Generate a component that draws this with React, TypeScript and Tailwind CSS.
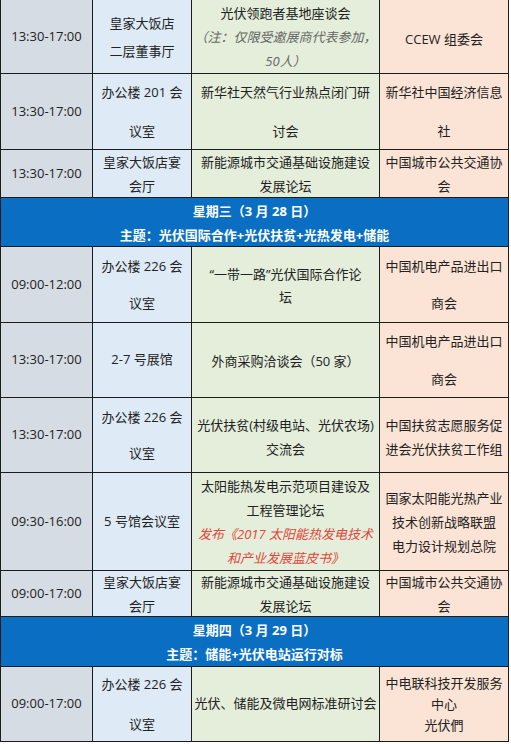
import React from 'react';

type Line = string | { text: string; kind: 'note' | 'red' };

interface Cell {
  lines: Line[];
  lh?: string;
  pad?: string;
}

interface Row {
  type: 'row';
  time: string;
  venue: Cell;
  event: Cell;
  org: Cell;
}

interface Header {
  type: 'header';
  day: string;
  theme: string;
}

const rows: (Row | Header)[] = [
  {
    type: 'row',
    time: '13:30-17:00',
    venue: { lines: ['皇家大饭店', '二层董事厅'], lh: 'leading-[28px]' },
    event: {
      lines: [
        '光伏领跑者基地座谈会',
        { text: '（注：仅限受邀展商代表参加，', kind: 'note' },
        { text: '50人）', kind: 'note' },
      ],
      lh: 'leading-[24px]',
    },
    org: { lines: ['CCEW 组委会'], pad: 'pt-[6px]' },
  },
  {
    type: 'row',
    time: '13:30-17:00',
    venue: { lines: ['办公楼 201 会', '议室'], lh: 'leading-[39px]' },
    event: { lines: ['新华社天然气行业热点闭门研', '讨会'], lh: 'leading-[39px]' },
    org: { lines: ['新华社中国经济信息', '社'], lh: 'leading-[39px]' },
  },
  {
    type: 'row',
    time: '13:30-17:00',
    venue: { lines: ['皇家大饭店宴', '会厅'], lh: 'leading-[24px]' },
    event: { lines: ['新能源城市交通基础设施建设', '发展论坛'], lh: 'leading-[24px]' },
    org: { lines: ['中国城市公共交通协', '会'], lh: 'leading-[24px]' },
  },
  { type: 'header', day: '星期三（3 月 28 日）', theme: '主题：光伏国际合作+光伏扶贫+光热发电+储能' },
  {
    type: 'row',
    time: '09:00-12:00',
    venue: { lines: ['办公楼 226 会', '议室'], lh: 'leading-[37px]' },
    event: { lines: ['“一带一路”光伏国际合作论', '坛'], lh: 'leading-[23px]', pad: 'pt-[3px]' },
    org: { lines: ['中国机电产品进出口', '商会'], lh: 'leading-[37px]' },
  },
  {
    type: 'row',
    time: '13:30-17:00',
    venue: { lines: ['2-7 号展馆'] },
    event: { lines: ['外商采购洽谈会（50 家）'], pad: 'pt-[4px]' },
    org: { lines: ['中国机电产品进出口', '商会'], lh: 'leading-[38px]' },
  },
  {
    type: 'row',
    time: '13:30-17:00',
    venue: { lines: ['办公楼 226 会', '议室'], lh: 'leading-[36px]' },
    event: { lines: ['光伏扶贫(村级电站、光伏农场)', '交流会'], lh: 'leading-[24px]', pad: 'pt-[4px]' },
    org: { lines: ['中国扶贫志愿服务促', '进会光伏扶贫工作组'], lh: 'leading-[24px]', pad: 'pt-[4px]' },
  },
  {
    type: 'row',
    time: '09:30-16:00',
    venue: { lines: ['5 号馆会议室'] },
    event: {
      lines: [
        '太阳能热发电示范项目建设及',
        '工程管理论坛',
        { text: '发布《2017 太阳能热发电技术', kind: 'red' },
        { text: '和产业发展蓝皮书》', kind: 'red' },
      ],
      lh: 'leading-[24px]',
    },
    org: { lines: ['国家太阳能光热产业', '技术创新战略联盟', '电力设计规划总院'], lh: 'leading-[24px]' },
  },
  {
    type: 'row',
    time: '09:00-17:00',
    venue: { lines: ['皇家大饭店宴', '会厅'], lh: 'leading-[24px]' },
    event: { lines: ['新能源城市交通基础设施建设', '发展论坛'], lh: 'leading-[24px]' },
    org: { lines: ['中国城市公共交通协', '会'], lh: 'leading-[24px]' },
  },
  { type: 'header', day: '星期四（3 月 29 日）', theme: '主题：储能+光伏电站运行对标' },
  {
    type: 'row',
    time: '09:00-17:00',
    venue: { lines: ['办公楼 226 会', '议室'], lh: 'leading-[40px]' },
    event: { lines: ['光伏、储能及微电网标准研讨会'] },
    org: { lines: ['中电联科技开发服务', '中心', '光伏們'], lh: 'leading-[21px]' },
  },
];

const CellBox = ({ cell, bg }: { cell: Cell; bg: string }) => (
  <div className={`${bg} flex flex-col items-center justify-center text-center ${cell.lh ?? ''} ${cell.pad ?? ''}`}>
    {cell.lines.map((line, i) =>
      typeof line === 'string' ? (
        <div key={i} className="whitespace-nowrap">
          {line}
        </div>
      ) : (
        <div
          key={i}
          className={
            line.kind === 'red'
              ? 'whitespace-nowrap italic text-[#e0463c]'
              : 'whitespace-nowrap italic text-[#666]'
          }
        >
          {line.text}
        </div>
      )
    )}
  </div>
);

export default function App() {
  return (
    <div className="w-[511px] h-[744px] bg-white font-['Open_Sans','Noto_Sans_CJK_SC',sans-serif] text-[13px] text-[#222]">
      <div className="w-[509px] grid grid-cols-[91px_98px_187px_128px] grid-rows-[73px_75px_47px_48px_75px_74px_74px_97px_45px_49px_74px] gap-px bg-[#1c1c1c] px-px pb-px">
        {rows.map((r, i) =>
          r.type === 'header' ? (
            <div
              key={i}
              className="col-span-4 bg-[#0a6fc2] flex flex-col items-center justify-center text-white font-bold leading-[24px] pt-[1px]"
            >
              <div className="whitespace-nowrap">{r.day}</div>
              <div className="whitespace-nowrap">{r.theme}</div>
            </div>
          ) : (
            <React.Fragment key={i}>
              <div className="bg-[#d6dce4] flex items-center justify-center whitespace-nowrap">{r.time}</div>
              <CellBox cell={r.venue} bg="bg-[#deeaf6]" />
              <CellBox cell={r.event} bg="bg-[#e4eeda]" />
              <CellBox cell={r.org} bg="bg-[#fbe4d5]" />
            </React.Fragment>
          )
        )}
      </div>
    </div>
  );
}
